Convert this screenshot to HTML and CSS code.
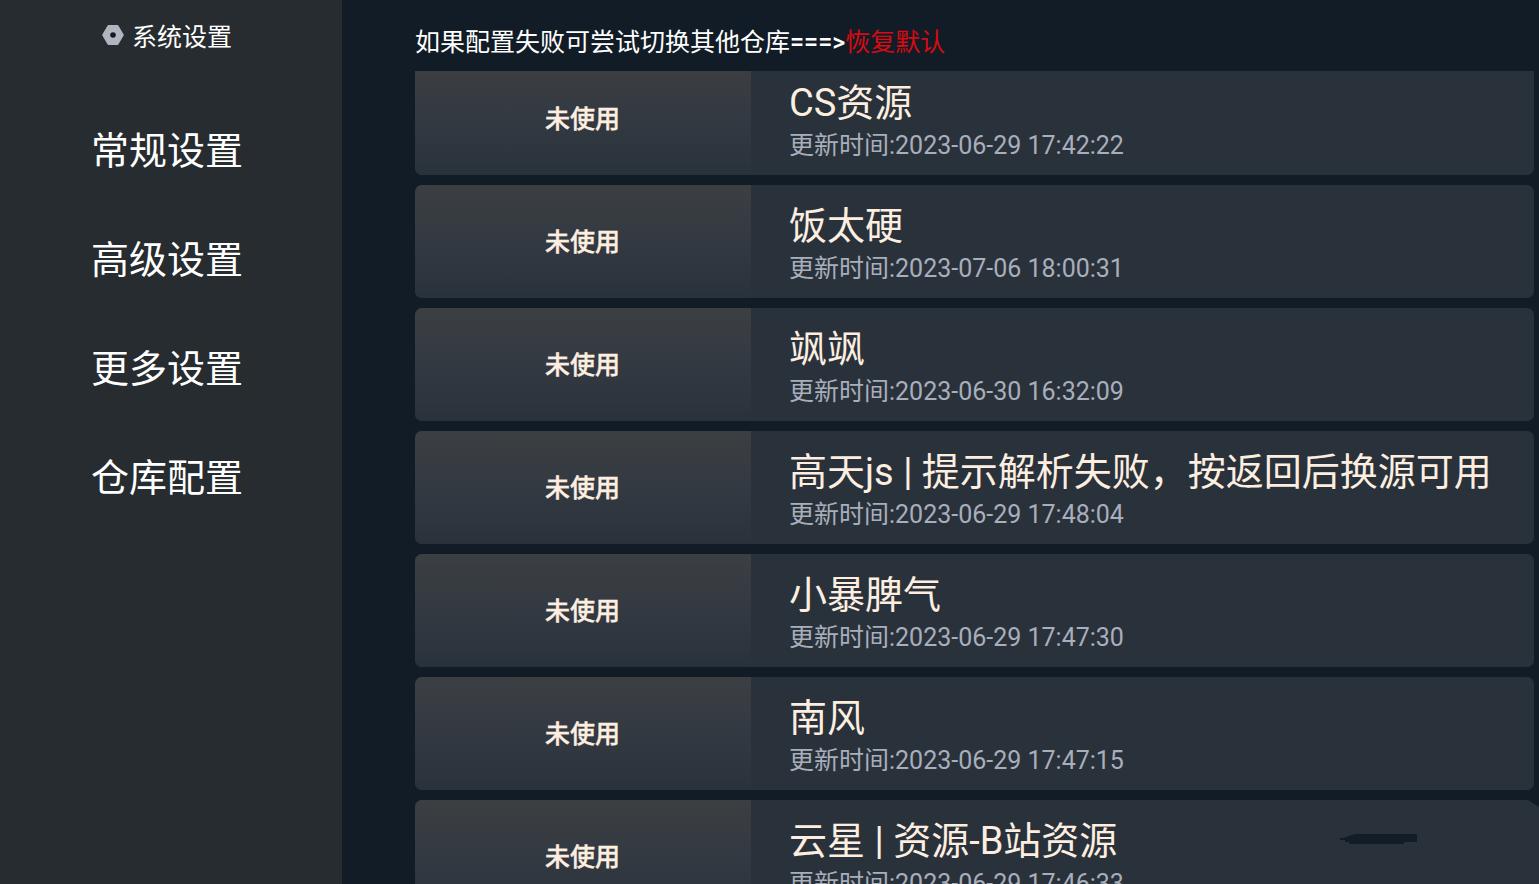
FILE: index.html
```html
<!DOCTYPE html>
<html lang="zh-CN">
<head>
    <meta charset="UTF-8">
    <meta name="viewport" content="width=device-width, initial-scale=1.0">
    <title>系统设置</title>
    <link rel="stylesheet" href="styles.css">
</head>
<body>
    <div class="app">
        <aside class="sidebar">
            <div class="sidebar-title">
                <svg class="nut-icon" viewBox="0 0 22 20" width="22" height="20">
                    <path d="M6.5 1h9L20.8 10l-5.3 9h-9L1.2 10z" fill="#b1b5bf" stroke="#b1b5bf" stroke-width="2" stroke-linejoin="round"/>
                    <circle cx="11" cy="10" r="2.8" fill="#141a22"/>
                </svg>
                <span>系统设置</span>
            </div>
            <nav class="menu">
                <a class="menu-item">常规设置</a>
                <a class="menu-item">高级设置</a>
                <a class="menu-item">更多设置</a>
                <a class="menu-item">仓库配置</a>
            </nav>
        </aside>

        <main class="content">
            <p class="tip">如果配置失败可尝试切换其他仓库<span class="arrow">===&gt;</span><span class="reset">恢复默认</span></p>

            <div class="list">
                <div class="card">
                    <div class="status">未使用</div>
                    <div class="info">
                        <div class="name">CS资源</div>
                        <div class="time">更新时间:2023-06-29 17:42:22</div>
                    </div>
                </div>
                <div class="card">
                    <div class="status">未使用</div>
                    <div class="info">
                        <div class="name">饭太硬</div>
                        <div class="time">更新时间:2023-07-06 18:00:31</div>
                    </div>
                </div>
                <div class="card">
                    <div class="status">未使用</div>
                    <div class="info">
                        <div class="name">飒飒</div>
                        <div class="time">更新时间:2023-06-30 16:32:09</div>
                    </div>
                </div>
                <div class="card">
                    <div class="status">未使用</div>
                    <div class="info">
                        <div class="name">高天js | 提示解析失败，按返回后换源可用</div>
                        <div class="time">更新时间:2023-06-29 17:48:04</div>
                    </div>
                </div>
                <div class="card">
                    <div class="status">未使用</div>
                    <div class="info">
                        <div class="name">小暴脾气</div>
                        <div class="time">更新时间:2023-06-29 17:47:30</div>
                    </div>
                </div>
                <div class="card">
                    <div class="status">未使用</div>
                    <div class="info">
                        <div class="name">南风</div>
                        <div class="time">更新时间:2023-06-29 17:47:15</div>
                    </div>
                </div>
                <div class="card card-last">
                    <div class="status">未使用</div>
                    <div class="info">
                        <div class="name">云星 | 资源-B站资源</div>
                        <div class="time">更新时间:2023-06-29 17:46:33</div>
                    </div>
                    <svg class="mark" viewBox="0 0 77 10" width="77" height="10">
                        <path d="M0 4h3l12-4h62v8H64v2H10L8 8H5V6H0z" fill="#121d27"/>
                    </svg>
                </div>
            </div>
        </main>
    </div>
</body>
</html>
```

FILE: styles.css
```css
* {
    box-sizing: border-box;
}
body {
    margin: 0;
    font-family: Roboto, "Noto Sans CJK SC", sans-serif;
    background-color: #121c26;
    color: #fff;
}
.app {
    display: flex;
    height: 884px;
    overflow: hidden;
}

/* Sidebar */
.sidebar {
    width: 342px;
    flex-shrink: 0;
    background-color: #262c2f;
}
.sidebar-title {
    display: flex;
    align-items: center;
    gap: 8px;
    height: 70px;
    padding-left: 102px;
    font-size: 25px;
}
.menu {
    display: flex;
    flex-direction: column;
    padding-top: 27px;
}
.menu-item {
    height: 109px;
    padding-left: 91px;
    font-size: 38px;
    line-height: 109px;
}

/* Content */
.content {
    display: flex;
    flex-direction: column;
    flex: 1;
    min-width: 0;
    padding-left: 73px;
}
.tip {
    flex-shrink: 0;
    height: 71px;
    margin: 0;
    padding-top: 23px;
    font-size: 25px;
    line-height: 40px;
}
.arrow {
    font-weight: 500;
}
.reset {
    color: #d90a12;
}
.list {
    flex: 1;
    min-height: 0;
    overflow: hidden;
}
.card {
    position: relative;
    display: flex;
    height: 113px;
    margin: 0 5px 10px 0;
    border-radius: 7px;
    background-color: #29323b;
    overflow: hidden;
}
/* the list is scrolled down a little */
.card:first-child {
    margin-top: -9px;
}
.card-last {
    margin-right: 0;
    clip-path: polygon(0 0, 1113px 0, 100% 7px, 100% 100%, 0 100%);
}
.status {
    width: 336px;
    flex-shrink: 0;
    padding: 1px 1px 0 0;
    background: linear-gradient(#3c3f42, #343a42 45%, #29323b);
    color: #fdeee0;
    font-size: 25px;
    font-weight: 500;
    line-height: 113px;
    text-align: center;
    -webkit-text-stroke: 0.4px #fdeee0;
}
.info {
    padding: 17px 0 0 38px;
    white-space: nowrap;
}
.name {
    color: #fdeee0;
    font-size: 38px;
    line-height: 48px;
}
.time {
    color: #a9aebb;
    font-size: 25px;
    line-height: 38px;
}
.mark {
    position: absolute;
    top: 34px;
    left: 925px;
}
```
